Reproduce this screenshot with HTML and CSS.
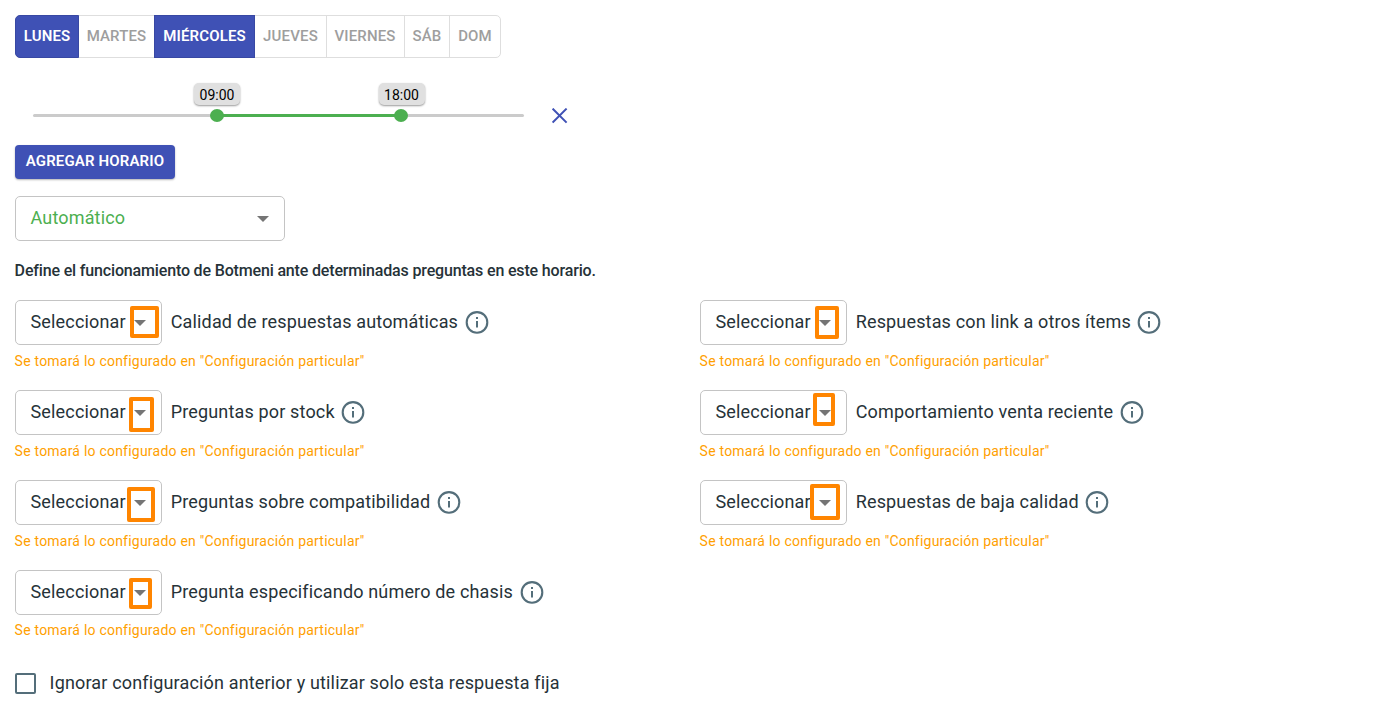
FILE: index.html
```html
<!DOCTYPE html>
<html lang="es">
<head>
<meta charset="utf-8">
<title>Horarios</title>
<link rel="stylesheet" href="styles.css">
</head>
<body>
<svg class="defs" width="0" height="0">
  <symbol id="info" viewBox="0 0 24 24"><circle cx="12" cy="12.4" r="10.3" fill="none" stroke="currentColor" stroke-width="2.1"/><path fill="currentColor" d="M11 7h2v2h-2zM11 11h2v6.5h-2z"/></symbol>
  <symbol id="arrow" viewBox="0 0 12 6"><path fill="currentColor" d="M0 0h12L6 6z"/></symbol>
</svg>
<main class="page">
  <div class="days">
    <button class="day mon on"><span>LUNES</span></button>
    <button class="day tue"><span>MARTES</span></button>
    <button class="day wed on"><span>MIÉRCOLES</span></button>
    <button class="day thu"><span>JUEVES</span></button>
    <button class="day fri line"><span>VIERNES</span></button>
    <button class="day sat line"><span>SÁB</span></button>
    <button class="day sun line"><span>DOM</span></button>
  </div>
  <div class="schedule">
    <div class="slider">
      <div class="range"></div>
      <div class="thumb from"><span class="tip">09:00</span></div>
      <div class="thumb to"><span class="tip">18:00</span></div>
    </div>
    <svg class="close" viewBox="0 0 16 16"><path d="M.6 .6l14 14M14.6 .6L.6 14.6" fill="none" stroke="currentColor" stroke-width="2"/></svg>
  </div>
  <button class="add">AGREGAR HORARIO</button>
  <div class="select mode"><span class="txt">Automático</span><svg class="arrow"><use href="#arrow"/></svg></div>
  <p class="intro">Define el funcionamiento de Botmeni ante determinadas preguntas en este horario.</p>
  <div class="options">
    <div class="option">
      <div class="row"><div class="select"><span class="txt">Seleccionar</span><svg class="arrow"><use href="#arrow"/></svg><i class="mark m1"></i></div><span class="txt label">Calidad de respuestas automáticas</span><svg class="info"><use href="#info"/></svg></div>
      <p class="help">Se tomará lo configurado en "Configuración particular"</p>
    </div>
    <div class="option">
      <div class="row"><div class="select"><span class="txt">Seleccionar</span><svg class="arrow"><use href="#arrow"/></svg><i class="mark m2"></i></div><span class="txt label">Respuestas con link a otros ítems</span><svg class="info"><use href="#info"/></svg></div>
      <p class="help">Se tomará lo configurado en "Configuración particular"</p>
    </div>
    <div class="option">
      <div class="row"><div class="select"><span class="txt">Seleccionar</span><svg class="arrow"><use href="#arrow"/></svg><i class="mark m3"></i></div><span class="txt label">Preguntas por stock</span><svg class="info"><use href="#info"/></svg></div>
      <p class="help">Se tomará lo configurado en "Configuración particular"</p>
    </div>
    <div class="option">
      <div class="row"><div class="select"><span class="txt">Seleccionar</span><svg class="arrow"><use href="#arrow"/></svg><i class="mark m4"></i></div><span class="txt label">Comportamiento venta reciente</span><svg class="info"><use href="#info"/></svg></div>
      <p class="help">Se tomará lo configurado en "Configuración particular"</p>
    </div>
    <div class="option">
      <div class="row"><div class="select"><span class="txt">Seleccionar</span><svg class="arrow"><use href="#arrow"/></svg><i class="mark m5"></i></div><span class="txt label">Preguntas sobre compatibilidad</span><svg class="info"><use href="#info"/></svg></div>
      <p class="help">Se tomará lo configurado en "Configuración particular"</p>
    </div>
    <div class="option">
      <div class="row"><div class="select"><span class="txt">Seleccionar</span><svg class="arrow"><use href="#arrow"/></svg><i class="mark m6"></i></div><span class="txt label">Respuestas de baja calidad</span><svg class="info"><use href="#info"/></svg></div>
      <p class="help">Se tomará lo configurado en "Configuración particular"</p>
    </div>
    <div class="option last">
      <div class="row"><div class="select"><span class="txt">Seleccionar</span><svg class="arrow"><use href="#arrow"/></svg><i class="mark m7"></i></div><span class="txt label">Pregunta especificando número de chasis</span><svg class="info"><use href="#info"/></svg></div>
      <p class="help">Se tomará lo configurado en "Configuración particular"</p>
    </div>
  </div>
  <label class="ignore"><span class="box"></span><span class="txt">Ignorar configuración anterior y utilizar solo esta respuesta fija</span></label>
</main>
</body>
</html>
```

FILE: styles.css
```css
* { box-sizing: border-box; }
body {
  margin: 0;
  background: #fff;
  color: #263238;
  font-family: Roboto, "Liberation Sans", sans-serif;
  overflow: hidden;
}
.defs { display: none; }
.page { padding: 15px 0 0 15px; width: 1385px; }
button { font-family: inherit; margin: 0; padding: 0; border: 0; }
.txt { font-size: 18px; line-height: 24px; letter-spacing: 0.16px; white-space: nowrap; }

.days { display: flex; height: 43px; width: 486px; border: 1px solid #dedede; border-radius: 5px; }
.day {
  background: none;
  color: #9e9e9e;
  font-size: 15px;
  font-weight: 500;
  letter-spacing: 0.15px;
  line-height: 41px;
  white-space: nowrap;
}
.day.on { margin: -1px 0; background: #3f51b5; color: #fff; font-weight: 600; border: 1px solid #3848a3; }
.line { border-left: 1px solid #dedede; }
.mon { width: 64px; margin-left: -1px !important; border-radius: 5px 0 0 5px; }
.tue { width: 75px; }
.wed { width: 101px; }
.thu { width: 71px; }
.fri { width: 78px; padding-right: 1px; }
.sat { width: 45px; }
.sun { width: 51px; }

.schedule { display: flex; align-items: center; height: 17px; margin: 49px 0 0 18px; }
.slider { position: relative; width: 491px; height: 3px; border-radius: 2px; background: #cbcbcb; }
.range { position: absolute; left: 184px; width: 184px; height: 3px; background: #4caf50; }
.thumb { position: absolute; top: -5px; width: 14px; height: 13px; border-radius: 50%; background: #4caf50; }
.from { left: 177px; }
.to { left: 361px; }
.tip {
  position: absolute;
  top: -26px;
  left: -16px;
  width: 46px;
  height: 22px;
  border-radius: 5px;
  background: #e0e0e0;
  box-shadow: 0 1px 2px rgba(0, 0, 0, .4);
  color: #000;
  font-size: 14px;
  line-height: 24px;
  letter-spacing: 0;
  text-align: center;
}
.to .tip { left: -15.5px; }
.close { width: 16px; height: 16px; margin-left: 27.5px; color: #3f51b5; }

.add {
  display: block;
  width: 160px;
  height: 34px;
  margin-top: 21px;
  padding-bottom: 2px;
  border-radius: 4px;
  background: #3f51b5;
  box-shadow: 0 1px 2px rgba(0, 0, 0, .3);
  color: #fff;
  font-size: 15px;
  font-weight: 600;
  line-height: 32px;
  letter-spacing: 0.15px;
  white-space: nowrap;
}
.select {
  position: relative;
  flex: none;
  display: flex;
  align-items: center;
  justify-content: space-between;
  width: 147px;
  height: 45px;
  padding: 0 15px 2px 14.5px;
  border: 1px solid #c4c4c4;
  border-radius: 5px;
}
.mode { width: 270px; margin-top: 17px; color: #4caf50; }
.arrow { flex: none; width: 12px; height: 6px; margin-top: 3px; color: #757575; }
.intro { margin: 19px 0 0 -0.4px; font-size: 16px; font-weight: 500; line-height: 22px; letter-spacing: -0.16px; white-space: nowrap; }

.options { display: grid; grid-template-columns: 685px 685px; margin-top: 18px; }
.option { height: 90px; }
.row { display: flex; align-items: center; height: 45px; }
.label { margin: 0 6.6px 2px 8.7px; }
.info { flex: none; width: 24px; height: 24px; margin-bottom: 1px; color: #546e7a; }
.help { margin: 6px 0 0 -0.4px; color: #ffa000; font-size: 14px; line-height: 20px; letter-spacing: 0.22px; white-space: nowrap; }
.last .help { margin-top: 5px; }

/* Highlight frames drawn over the dropdown arrows */
.mark { position: absolute; border: 4px solid #ff8500; border-radius: 2px; }
.m1 { left: 114px; top: 5px; width: 29px; height: 32px; }
.m2 { left: 114px; top: 5px; width: 24px; height: 33px; }
.m3 { left: 113px; top: 6px; width: 25px; height: 35px; }
.m4 { left: 112px; top: 2px; width: 22px; height: 33px; }
.m5 { left: 111px; top: 6px; width: 28px; height: 35px; }
.m6 { left: 109px; top: 3px; width: 30px; height: 36px; }
.m7 { left: 113px; top: 7px; width: 23px; height: 31px; }

.ignore { display: flex; align-items: center; margin-top: 11px; }
.box { width: 21px; height: 21px; margin: 0 13.6px 0 0; border: 2px solid #546e7a; border-radius: 2px; }
```
